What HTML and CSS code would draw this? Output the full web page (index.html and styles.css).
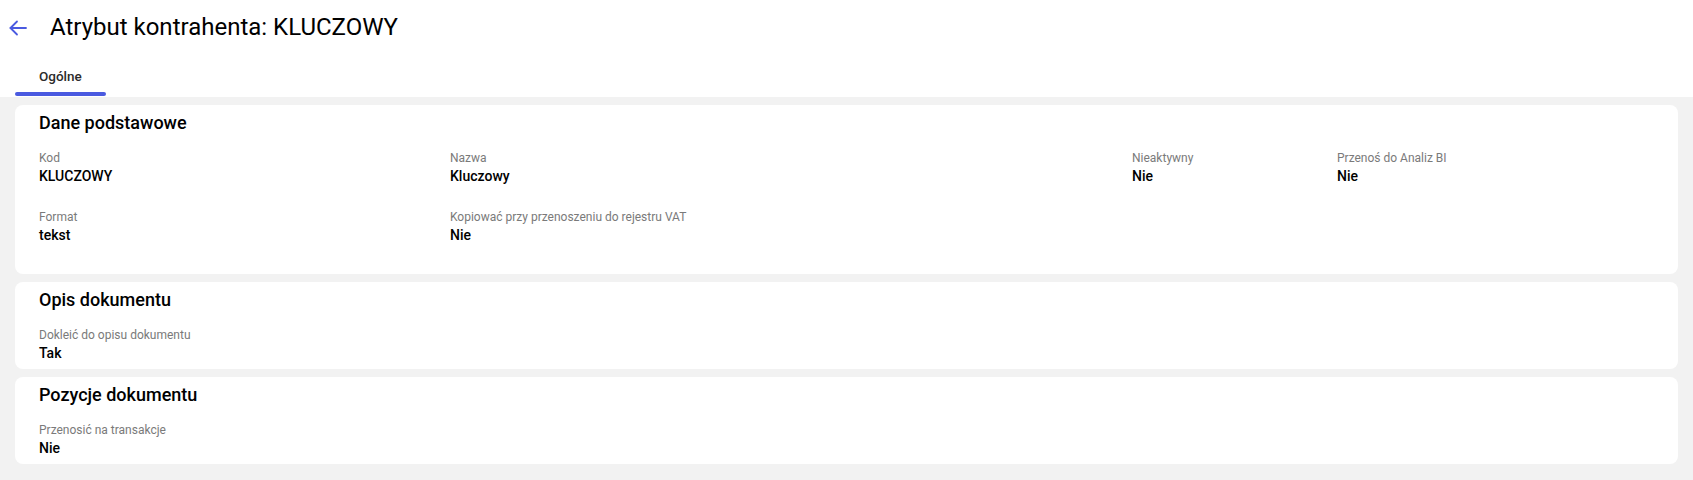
FILE: index.html
```html
<!DOCTYPE html>
<html lang="pl">
<head>
<meta charset="utf-8">
<title>Atrybut kontrahenta: KLUCZOWY</title>
<link rel="stylesheet" href="styles.css">
</head>
<body>
<header class="page-header">
  <button class="back" type="button" aria-label="Wstecz">
    <svg width="18" height="16" viewBox="0 0 18 16" fill="none" stroke="currentColor" stroke-width="1.8" stroke-linecap="round" stroke-linejoin="round">
      <path d="M17 8H1.5"/>
      <path d="M8 1.5L1.5 8L8 14.5"/>
    </svg>
  </button>
  <h1 class="title">Atrybut kontrahenta: KLUCZOWY</h1>
</header>
<nav class="tabs">
  <div class="tab active">
    <span class="tab-label">Ogólne</span>
    <span class="tab-ink"></span>
  </div>
</nav>
<main class="content">
  <section class="card">
    <h2 class="card-title">Dane podstawowe</h2>
    <div class="fields fields-main">
      <div class="field"><div class="label">Kod</div><div class="value">KLUCZOWY</div></div>
      <div class="field"><div class="label">Nazwa</div><div class="value">Kluczowy</div></div>
      <div class="field"><div class="label">Nieaktywny</div><div class="value">Nie</div></div>
      <div class="field"><div class="label">Przenoś do Analiz BI</div><div class="value">Nie</div></div>
      <div class="field"><div class="label">Format</div><div class="value">tekst</div></div>
      <div class="field"><div class="label">Kopiować przy przenoszeniu do rejestru VAT</div><div class="value">Nie</div></div>
    </div>
  </section>
  <section class="card">
    <h2 class="card-title">Opis dokumentu</h2>
    <div class="fields">
      <div class="field"><div class="label">Dokleić do opisu dokumentu</div><div class="value">Tak</div></div>
    </div>
  </section>
  <section class="card">
    <h2 class="card-title">Pozycje dokumentu</h2>
    <div class="fields">
      <div class="field"><div class="label">Przenosić na transakcje</div><div class="value">Nie</div></div>
    </div>
  </section>
</main>
</body>
</html>
```
FILE: styles.css
```css
* { box-sizing: border-box; }

html, body {
  margin: 0;
  padding: 0;
  background: #ffffff;
  font-family: Roboto, "Noto Sans", Arial, sans-serif;
  color: #000000;
}

.page-header {
  display: flex;
  align-items: center;
  padding: 11px 0 0 9px;
  height: 43px;
}

.back {
  display: flex;
  align-items: center;
  justify-content: center;
  width: 18px;
  height: 16px;
  padding: 0;
  margin: 1px 23px 0 0;
  border: 0;
  background: none;
  color: #4a5ae0;
  cursor: pointer;
}

.title {
  margin: 0;
  font-size: 24px;
  line-height: 32px;
  font-weight: 400;
  color: #000000;
}

.tabs {
  display: flex;
  padding: 25px 0 1px 15px;
}

.tab {
  display: flex;
  flex-direction: column;
  align-items: stretch;
}

.tab-label {
  padding: 0 24px;
  font-size: 13.5px;
  line-height: 16px;
  font-weight: 500;
  color: #2b2b2b;
  text-align: center;
}

.tab-ink {
  display: block;
  height: 4px;
  margin-top: 8px;
  border-radius: 2px;
  background: #4a5ae0;
}

.content {
  display: flex;
  flex-direction: column;
  gap: 8px;
  padding: 8px 15px 17px;
  background: #f2f2f2;
}

.card {
  background: #ffffff;
  border-radius: 8px;
  padding: 6px 24px 6px;
}

.card-title {
  margin: 0;
  font-size: 18px;
  line-height: 24px;
  font-weight: 500;
  color: #000000;
}

.fields {
  display: grid;
  grid-template-columns: 1fr;
  margin-top: 15px;
}

.fields-main {
  grid-template-columns: 411px 682px 205px 1fr;
  row-gap: 23px;
  padding-bottom: 23px;
}

.label {
  font-size: 12px;
  line-height: 16px;
  color: #7a7a7a;
}

.value {
  font-size: 14px;
  line-height: 20px;
  font-weight: 500;
  color: #000000;
}
```
